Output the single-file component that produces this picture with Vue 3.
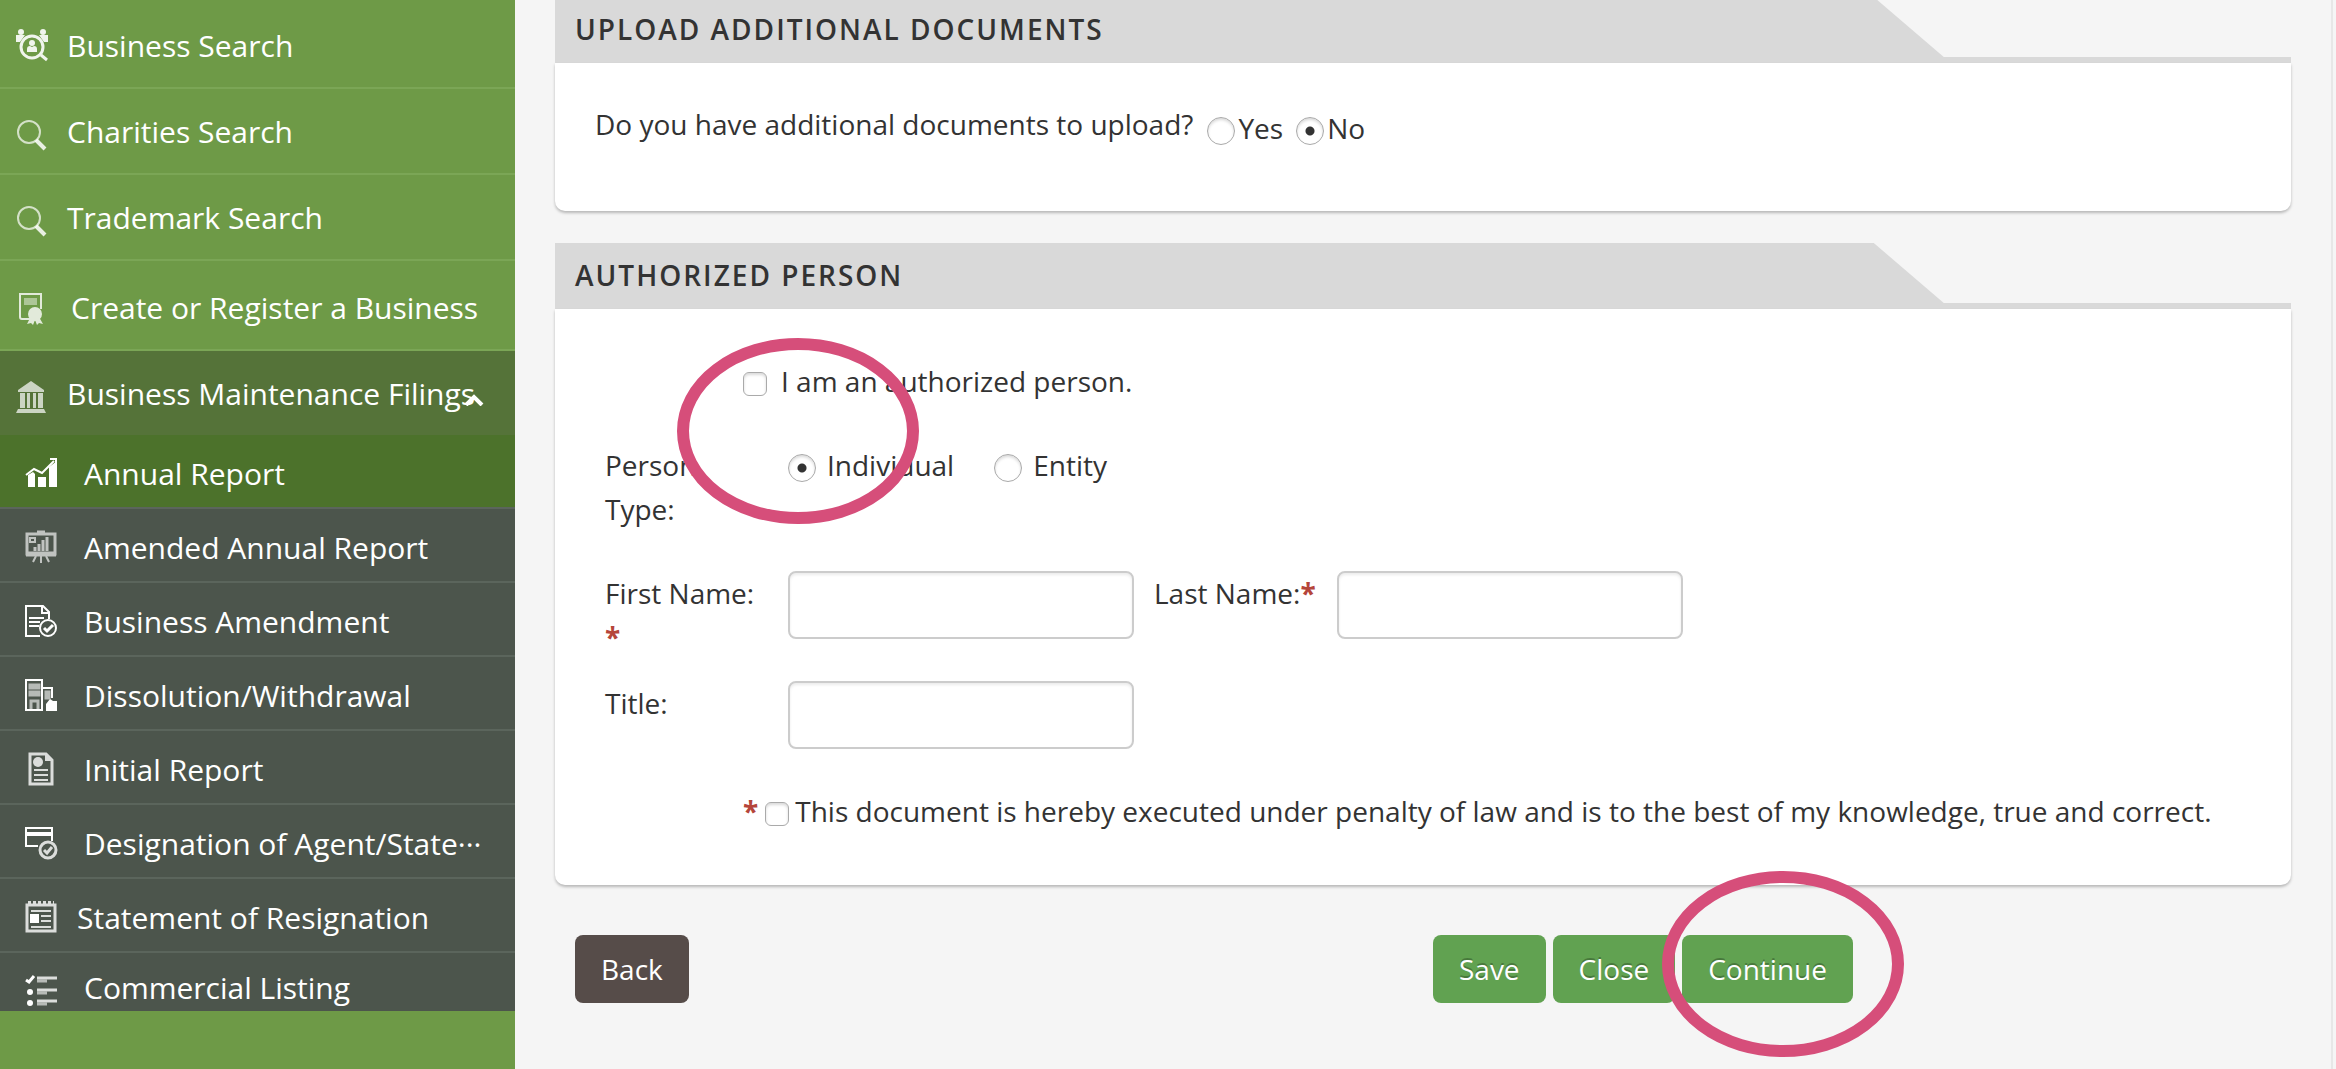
<script setup>
import { ref } from 'vue';

const uploadDocs = ref('no');
const isAuthorized = ref(false);
const personType = ref('individual');
const firstName = ref('');
const lastName = ref('');
const title = ref('');
const executed = ref(false);

// Icon shapes, drawn in currentColor
const icons = {
  people: `<g fill="currentColor" opacity="0.9"><circle cx="5" cy="7" r="3"/><circle cx="27" cy="7" r="3"/><path d="M0 10h9l-5 7H0zM32 10h-9l5 7h4z"/><circle cx="16" cy="18" r="3"/><path d="M11 27v-3q0-3 3-3l2 1 2-1q3 0 3 3v3z"/></g><g fill="none" stroke="currentColor" stroke-width="3" opacity="0.9"><circle cx="16" cy="22" r="11"/><path d="M25 30l6 5"/></g>`,
  search: `<g fill="none" stroke="currentColor"><circle cx="13" cy="21" r="11" stroke-width="2" opacity="0.7"/><path d="M20 29l9 9" stroke-width="4" opacity="0.85"/></g>`,
  certificate: `<g opacity="0.8"><path d="M17 34H6q-2 0-2-2V9h21v15" fill="none" stroke="currentColor" stroke-width="2"/><path d="M8 13h13v7H8z" fill="currentColor" opacity="0.55"/><circle cx="19" cy="29" r="7" fill="currentColor"/><path d="M14 33l-3 6 4-1 2 2 2-5 2 5 2-2 4 1-4-7z" fill="currentColor"/></g>`,
  bank: `<g fill="currentColor" opacity="0.7"><path d="M15 8L2 17v2h26v-2zM4 20h5v15H4zM11 20h3v15h-3zM17 20h3v15h-3zM22 20h5v15h-5zM2 36h26l2 4H0z"/></g>`,
  chart: `<path d="M3 18l5-3 2 2v13H3zM13 20h8v10h-8zM24 10l8-6v26h-8z" fill="currentColor"/><path d="M1 18l8-6 8 4 12-12M25 2h6v6" fill="none" stroke="currentColor" stroke-width="2"/>`,
  board: `<g opacity="0.65" fill="none" stroke="currentColor"><path d="M2 3h28v20H2z" stroke-width="3"/><path d="M1 23h30" stroke-width="5"/><path d="M12 1h8" stroke-width="3"/><path d="M11 25l-3 6M16 25v7M21 25l3 6" stroke-width="2"/><path d="M5 7h5v4H5z" stroke-width="2"/><path d="M10 20v-4M14 20v-7M18 20V9M22 20V6" stroke-width="3"/></g>`,
  document: `<g fill="none" stroke="currentColor" stroke-width="2"><path d="M15 31H1V1h17l6 6v7M17 1v7h7M4 13h15M4 17h11M4 21h10"/><circle cx="23" cy="23" r="8"/><path d="M19 23l3 3 6-6" stroke-width="3"/></g>`,
  building: `<g fill="none" stroke="currentColor"><path d="M1 31V1h16v30zM18 9h9v10" stroke-width="2"/><path d="M5 6h3v3H5zM11 6h3v3h-3zM5 13h3v3H5zM11 13h3v3h-3zM6 31v-9h7v9M21 13h3v6h-3z" stroke-width="3" opacity="0.6"/></g><path d="M21 32v-7l4-5 3 2h4v10z" fill="currentColor"/>`,
  report: `<g opacity="0.8"><path d="M5 1h16l6 6v24H5z" fill="none" stroke="currentColor" stroke-width="3"/><circle cx="13" cy="9" r="5" fill="currentColor"/><path d="M20 1v7h7z" fill="currentColor"/><path d="M9 17h14M9 22h14M9 27h14" stroke="currentColor" stroke-width="2"/></g>`,
  card: `<path d="M13 19H1V1h26v13" fill="none" stroke="currentColor" stroke-width="2"/><path d="M1 7h26" stroke="currentColor" stroke-width="4"/><g fill="none" stroke="currentColor" opacity="0.8"><circle cx="23" cy="23" r="8" stroke-width="3"/><path d="M19 23l3 3 5-6" stroke-width="3"/></g>`,
  calendar: `<g opacity="0.8" fill="none" stroke="currentColor"><path d="M2 4h28v26H2z" stroke-width="3"/><path d="M3 2h26" stroke-width="4" stroke-dasharray="3 2"/><path d="M6 10h20M16 15h10M16 20h10M6 26h20" stroke-width="2"/></g><path d="M5 13h9v9H5z" fill="currentColor"/>`,
  list: `<g transform="translate(0 4)"><g fill="none" stroke="currentColor"><path d="M1 5l3 2 5-6" stroke-width="3"/><path d="M12 3h20M12 15h20M12 26h20" stroke-width="3" opacity="0.8"/><path d="M12 6h10M12 18h10M12 29h10" stroke-width="3" opacity="0.6"/></g><circle cx="5" cy="17" r="3" fill="currentColor"/><circle cx="5" cy="28" r="3" fill="currentColor"/></g>`
};

const menu = [
  { label: 'Business Search', icon: 'people' },
  { label: 'Charities Search', icon: 'search' },
  { label: 'Trademark Search', icon: 'search' },
  { label: 'Create or Register a Business', icon: 'certificate', tall: true },
  { label: 'Business Maintenance Filings', icon: 'bank', open: true }
];

const filings = [
  { label: 'Annual Report', icon: 'chart', active: true },
  { label: 'Amended Annual Report', icon: 'board' },
  { label: 'Business Amendment', icon: 'document' },
  { label: 'Dissolution/Withdrawal', icon: 'building' },
  { label: 'Initial Report', icon: 'report' },
  { label: 'Designation of Agent/State···', icon: 'card' },
  { label: 'Statement of Resignation', icon: 'calendar', near: true },
  { label: 'Commercial Listing', icon: 'list', last: true }
];
</script>

<template>
  <div class="page">
    <nav class="sidebar">
      <ul class="menu">
        <li v-for="item in menu" :key="item.label">
          <a href="#" class="menu-link" :class="{ tall: item.tall, open: item.open }">
            <svg class="menu-icon" viewBox="0 0 32 40" aria-hidden="true" v-html="icons[item.icon]"></svg>
            <span class="link-text">{{ item.label }}</span>
            <svg v-if="item.open" class="caret" viewBox="0 0 20 12" aria-hidden="true">
              <path d="M2 11l8-8 8 8" fill="none" stroke="currentColor" stroke-width="4" />
            </svg>
          </a>
        </li>
      </ul>
      <ul class="submenu">
        <li v-for="item in filings" :key="item.label">
          <a
            href="#"
            class="submenu-link"
            :class="{ active: item.active, near: item.near, last: item.last }"
          >
            <svg class="submenu-icon" viewBox="0 0 32 32" aria-hidden="true" v-html="icons[item.icon]"></svg>
            <span class="link-text">{{ item.label }}</span>
          </a>
        </li>
      </ul>
    </nav>

    <main class="content">
      <section class="panel">
        <header class="panel-header">
          <h2 class="panel-title">Upload Additional Documents</h2>
        </header>
        <div class="panel-body upload-body">
          <span id="upload-question">Do you have additional documents to upload?</span>
          <div class="upload-options" role="radiogroup" aria-labelledby="upload-question">
            <label class="choice snug">
              <input v-model="uploadDocs" type="radio" name="upload" value="yes" />
              <span>Yes</span>
            </label>
            <label class="choice snug">
              <input v-model="uploadDocs" type="radio" name="upload" value="no" />
              <span>No</span>
            </label>
          </div>
        </div>
      </section>

      <section class="panel">
        <header class="panel-header">
          <h2 class="panel-title">Authorized Person</h2>
        </header>
        <form id="person-form" class="panel-body person-body" @submit.prevent>
          <div class="form-row indented">
            <label class="choice wide">
              <input v-model="isAuthorized" type="checkbox" />
              <span>I am an authorized person.</span>
            </label>
          </div>

          <div class="form-row">
            <span id="type-label" class="field-label type-label">Person Type:</span>
            <div class="type-options" role="radiogroup" aria-labelledby="type-label">
              <label class="choice">
                <input v-model="personType" type="radio" name="type" value="individual" />
                <span>Individual</span>
              </label>
              <label class="choice">
                <input v-model="personType" type="radio" name="type" value="entity" />
                <span>Entity</span>
              </label>
            </div>
          </div>

          <div class="form-row">
            <label class="field-label" for="first-name">First Name: <b class="required">*</b></label>
            <input id="first-name" v-model="firstName" class="text-field" type="text" />
            <label class="field-label" for="last-name">Last Name:<b class="required">*</b></label>
            <input id="last-name" v-model="lastName" class="text-field" type="text" />
          </div>

          <div class="form-row close-row">
            <label class="field-label" for="title">Title:</label>
            <input id="title" v-model="title" class="text-field" type="text" />
          </div>

          <div class="form-row indented">
            <b class="required statement-star">*</b>
            <label class="choice statement">
              <input v-model="executed" type="checkbox" />
              <span>This document is hereby executed under penalty of law and is to the best of my knowledge, true and correct.</span>
            </label>
          </div>

          <!-- Highlight around the authorized person options -->
          <svg class="ring person-ring" viewBox="0 0 242 186" aria-hidden="true">
            <ellipse cx="121" cy="93" rx="115" ry="87" />
          </svg>
        </form>
      </section>

      <div class="actions">
        <button type="button" class="btn btn-back">Back</button>
        <div class="action-group">
          <button type="button" class="btn">Save</button>
          <button type="button" class="btn">Close</button>
          <div class="continue-wrap">
            <button type="submit" form="person-form" class="btn">Continue</button>
            <svg class="ring continue-ring" viewBox="0 0 242 186" aria-hidden="true">
              <ellipse cx="121" cy="93" rx="115" ry="87" />
            </svg>
          </div>
        </div>
      </div>
    </main>
  </div>
</template>

<style>
body {
  margin: 0;
  background: #f5f5f5;
}
</style>

<style scoped>
.page {
  display: flex;
  min-height: 100vh;
  box-sizing: border-box;
  padding-right: 3px;
  overflow: hidden;
  background: #f5f5f5;
  color: #333;
  font-family: 'Open Sans', 'Noto Sans', sans-serif;
  font-size: 28px;
  line-height: 44px;
}

.sidebar {
  width: 515px;
  flex-shrink: 0;
  background: #6e9a47;
  color: #fff;
  font-size: 30px;
}

.menu,
.submenu {
  list-style: none;
  margin: 0;
  padding: 0;
}

.menu {
  padding-top: 3px;
}

.menu-link,
.submenu-link {
  position: relative;
  display: flex;
  align-items: center;
  color: inherit;
  text-decoration: none;
  white-space: nowrap;
}

.link-text {
  padding-top: 2px;
}

.menu-link {
  height: 84px;
  padding-left: 16px;
  gap: 19px;
  border-bottom: 2px solid #7ba656;
}

.menu-link.tall {
  padding-top: 4px;
  gap: 23px;
}

.menu-link.tall .menu-icon {
  margin-top: -4px;
}

.menu-link.open {
  background: #557339;
  border-bottom: none;
}

.menu-icon,
.submenu-icon {
  width: 32px;
  flex-shrink: 0;
  overflow: visible;
}

.menu-icon {
  height: 40px;
}

.submenu-icon {
  height: 32px;
}

.caret {
  position: absolute;
  right: 31px;
  top: 43px;
  width: 20px;
  height: 12px;
}

.submenu {
  background: #4c554c;
}

.submenu-link {
  height: 68px;
  padding: 4px 0 0 25px;
  gap: 27px;
  border-bottom: 2px solid #5b655c;
}

.submenu-link.active {
  background: #4c722b;
}

.submenu-link.near {
  gap: 20px;
}

.submenu-link.last {
  height: 48px;
  padding-top: 10px;
  border-bottom: none;
}

.content {
  flex: 1;
  min-width: 0;
  padding: 0 40px;
  border-right: 2px solid #e7e7e7;
}

.panel {
  margin-bottom: 32px;
}

.panel:first-child {
  margin-top: -3px;
}

.panel-header {
  border-bottom: 6px solid #d9d9d9;
}

.panel-title {
  width: 80%;
  height: 60px;
  box-sizing: border-box;
  margin: 0;
  padding-left: 20px;
  background: #d9d9d9;
  clip-path: polygon(0 0, calc(100% - 70px) 0, 100% 100%, 0 100%);
  font-size: 28px;
  font-weight: 600;
  line-height: 64px;
  letter-spacing: 2px;
  text-transform: uppercase;
}

.panel-body {
  position: relative;
  background: #fff;
  border-radius: 0 0 10px 10px;
  box-shadow: 0 2px 3px rgba(0, 0, 0, 0.25);
}

.upload-body {
  display: flex;
  gap: 14px;
  padding: 39px 40px 61px;
}

.upload-options {
  display: flex;
  gap: 13px;
  padding-top: 4px;
}

.choice {
  display: flex;
  align-items: center;
  gap: 11px;
}

.choice.snug {
  gap: 3px;
}

.choice.wide {
  gap: 14px;
}

.choice.statement {
  gap: 6px;
}

.choice input {
  appearance: none;
  flex-shrink: 0;
  box-sizing: border-box;
  width: 24px;
  height: 24px;
  margin: 6px 0 0;
  border: 1px solid #aaa;
  border-radius: 6px;
  background: #fff;
  box-shadow: inset 0 2px 3px rgba(0, 0, 0, 0.15);
}

.choice input[type='radio'] {
  width: 28px;
  height: 28px;
  border-radius: 50%;
}

.choice input[type='radio']:checked {
  background: radial-gradient(circle, #333 4px, #fff 5px);
}

.choice input[type='checkbox']:checked {
  background: #61a251;
}

.person-body {
  padding: 50px 50px 52px;
}

.form-row {
  display: flex;
  align-items: flex-start;
}

.form-row + .form-row {
  margin-top: 40px;
}

.form-row + .close-row {
  margin-top: 22px;
}

.form-row.indented {
  padding-left: 138px;
}

.field-label {
  width: 183px;
  box-sizing: border-box;
  padding-right: 16px;
}

.type-label {
  padding-right: 80px;
}

.type-options {
  display: flex;
  gap: 40px;
}

.text-field {
  width: 346px;
  height: 68px;
  box-sizing: border-box;
  margin: 0 20px 0 0;
  padding: 8px 16px;
  border: 2px solid #ccc;
  border-radius: 8px;
  background: #fff;
  box-shadow: inset 0 2px 3px rgba(0, 0, 0, 0.08);
  color: inherit;
  font: inherit;
}

.required {
  color: #b5453a;
}

.statement-star {
  margin-right: 7px;
}

.actions {
  display: flex;
  justify-content: space-between;
  margin-top: 50px;
  padding: 0 438px 0 20px;
}

.action-group {
  display: flex;
  gap: 7px;
}

.btn {
  height: 68px;
  padding: 0 26px;
  border: none;
  border-radius: 8px;
  background: #61a251;
  color: #fff;
  font: inherit;
  text-shadow: 0 -2px 0 rgba(0, 0, 0, 0.25);
  cursor: pointer;
}

.btn-back {
  background: #564c49;
  text-shadow: none;
}

.continue-wrap {
  position: relative;
}

.ring {
  position: absolute;
  width: 242px;
  height: 186px;
  fill: none;
  stroke: #d64e7a;
  stroke-width: 12px;
  pointer-events: none;
}

.person-ring {
  left: 122px;
  top: 29px;
}

.continue-ring {
  left: -20px;
  top: -64px;
}
</style>
